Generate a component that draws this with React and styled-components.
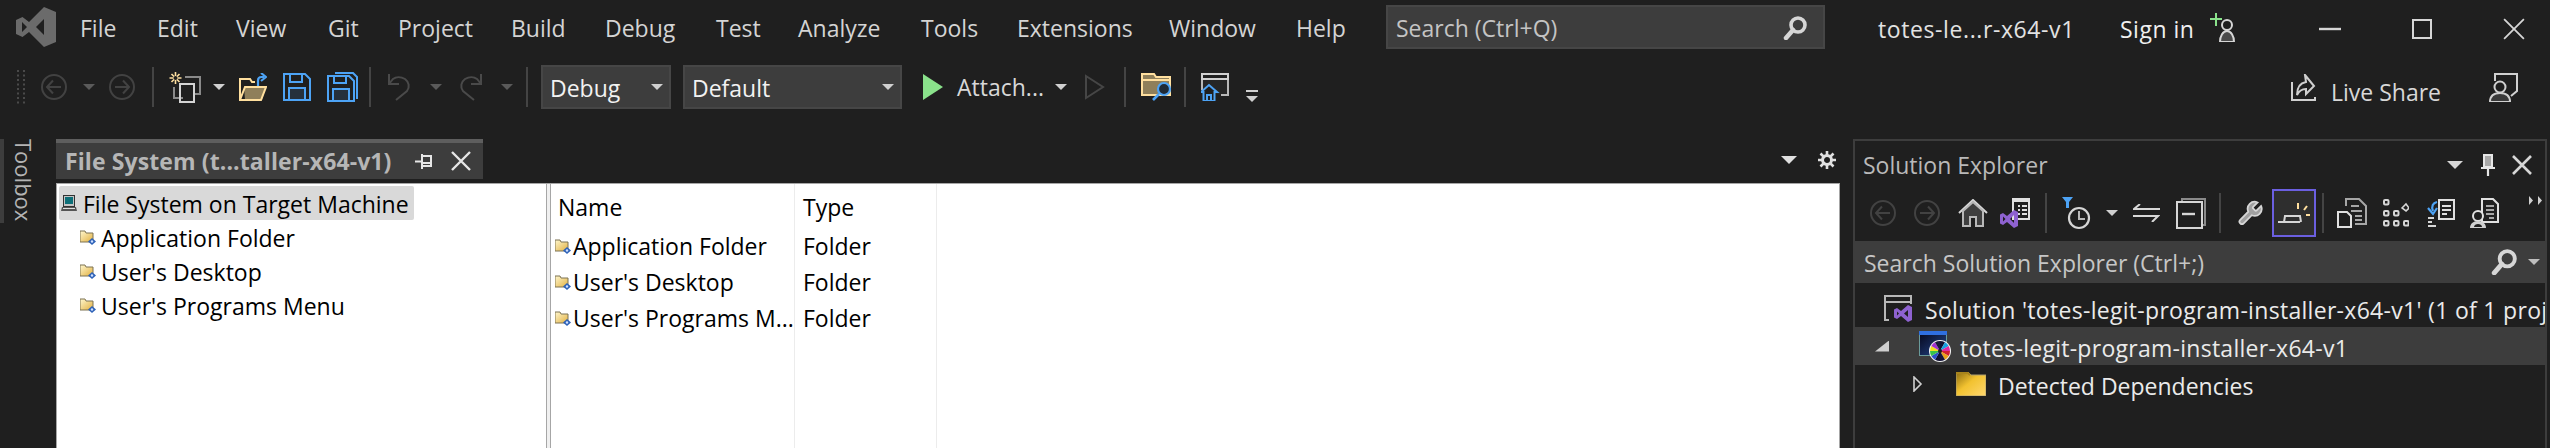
import React from 'react';
import styled, { createGlobalStyle } from 'styled-components';

const Global = createGlobalStyle`
  html, body { margin: 0; padding: 0; background: #1f1f1f; }
  * { box-sizing: border-box; }
`;

const FONT = `"Open Sans", "Noto Sans", "Liberation Sans", sans-serif`;

const Page = styled.div`
  width: 2550px; height: 448px; overflow: hidden; background: #1f1f1f;
  display: flex; flex-direction: column; font-family: ${FONT}; color: #d6d6d6;
  font-size: 23px; letter-spacing: 0;
`;
const TitleBar = styled.header`
  height: 54px; display: flex; align-items: center; flex: none;
`;
const Logo = styled.svg`
  width: 40px; height: 40px; margin-left: 16px; margin-right: 24px; flex: none;
`;
const MenuItem = styled.span`
  width: ${p => p.$w}px; flex: none; color: #d4d4d4; padding-top: 2px; white-space: nowrap;
`;
const QuickSearch = styled.div`
  width: 439px; height: 44px; margin-left: 1px; flex: none; background: #3d3d3d;
  border: 2px solid #464646; display: flex; align-items: center; justify-content: space-between;
  padding: 2px 16px 0 8px; color: #c4c4c4;
`;
const SolutionName = styled.span`
  margin-left: 53px; width: 242px; flex: none; color: #e2e2e2; padding-top: 4px; white-space: nowrap;
  letter-spacing: 0.6px;
`;
const SignIn = styled.span`
  width: 90px; flex: none; color: #f0f0f0; padding-top: 4px; letter-spacing: 0.5px;
`;
const WindowButtons = styled.div`
  margin-left: 81px; display: flex; gap: 71px; align-items: center; padding-top: 4px;
`;

const Toolbar = styled.div`
  height: 66px; flex: none; display: flex; align-items: center; padding-left: 16px;
`;
const ToolIcon = styled.svg`
  flex: none; margin-left: ${p => p.$ml || 0}px; display: block;
`;
const Sep = styled.i`
  flex: none; display: block; width: 2px; height: 40px; background: #444;
  margin-left: ${p => p.$ml || 0}px;
`;
const Arrow = styled.i`
  flex: none; display: block; width: 0; height: 0;
  border-left: ${p => p.$s || 6}px solid transparent; border-right: ${p => p.$s || 6}px solid transparent;
  border-top: ${p => p.$s || 6}px solid ${p => p.$c || '#d0d0d0'};
  margin-left: ${p => p.$ml || 0}px;
`;
const Combo = styled.div`
  width: ${p => p.$w}px; height: 44px; flex: none; margin-left: ${p => p.$ml}px;
  background: #3d3d3d; border: 2px solid #464646; display: flex; align-items: center;
  justify-content: space-between; padding: 0 6px 0 7px; color: #f2f2f2;
`;
const ComboText = styled.span`
  padding-top: 2px;
`;
const ToolText = styled.span`
  flex: none; margin-left: ${p => p.$ml || 0}px; width: ${p => p.$w}px; color: #d8d8d8;
  white-space: nowrap; padding-top: ${p => p.$pt || 0}px;
`;

const Body = styled.div`
  flex: 1; min-height: 0; display: flex; padding-top: 19px;
`;
const ToolboxStrip = styled.aside`
  width: 56px; flex: none; display: flex; align-items: flex-start;
`;
const StripBar = styled.i`
  display: block; width: 4px; height: 84px; background: #3d3d3d; flex: none;
`;
const StripLabel = styled.span`
  writing-mode: vertical-rl; margin-left: 8px; line-height: 24px; color: #b4b4b4; font-size: 22px;
`;
const DocArea = styled.main`
  width: 1784px; flex: none; display: flex; flex-direction: column;
`;
const TabWell = styled.div`
  height: 40px; flex: none; display: flex; align-items: center;
`;
const Tab = styled.div`
  width: 427px; height: 40px; flex: none; background: #3d3d3d; border-top: 4px solid #5e5e5e;
  display: flex; align-items: center; padding-left: 9px;
`;
const TabTitle = styled.span`
  width: 350px; flex: none; font-weight: 700; color: #b6b6b6; font-size: 23px; letter-spacing: 0.1px; white-space: nowrap;
`;
const WellTools = styled.div`
  margin-left: auto; display: flex; align-items: center; gap: 21px; padding-right: 4px; padding-top: 2px;
`;
const Designer = styled.div`
  flex: 1; min-height: 0; margin-top: 4px; background: #fff; border: 1px solid #a6a6a6;
  border-bottom: 0; display: flex; color: #000; box-shadow: inset 0 0 0 1px #fff;
`;
const TreePane = styled.div`
  width: 490px; flex: none; padding: 2px 2px; display: flex; flex-direction: column; align-items: flex-start;
  border-right: 1px solid #a6a6a6;
`;
const Splitter = styled.i`
  display: block; width: 4px; flex: none; background: #f0f0f0; border-right: 1px solid #a6a6a6;
`;
const TreeRow = styled.div`
  height: 34px; display: flex; align-items: center; white-space: nowrap; border-radius: 2px;
  padding: 0 5px 0 ${p => p.$indent}px; gap: ${p => p.$gap}px;
  background: ${p => (p.$sel ? '#d9d9d9' : 'transparent')};
`;
const TreeLabel = styled.span`
  padding-top: 2px;
`;
const ListPane = styled.div`
  flex: 1; display: flex; align-items: stretch;
`;
const ListColumn = styled.div`
  width: ${p => p.$w}px; flex: none; border-right: 1px solid #ececec; padding-top: 6px;
  padding-left: ${p => p.$pl}px; overflow: hidden;
`;
const ColHead = styled.div`
  height: 36px; line-height: 34px; margin-bottom: 2px; padding-left: ${p => p.$pl || 0}px;
`;
const ListCell = styled.div`
  height: 36px; display: flex; align-items: center; white-space: nowrap; gap: 2px;
`;

const SolutionPanel = styled.aside`
  margin-left: 13px; width: 694px; flex: none; border: 2px solid #3d3d3d; border-bottom: 0;
  display: flex; flex-direction: column;
`;
const PanelTitle = styled.div`
  height: 48px; flex: none; display: flex; align-items: center; padding-left: 8px; color: #b9b9b9;
`;
const PanelTitleText = styled.span`
  width: 584px; flex: none; white-space: nowrap;
`;
const PanelBar = styled.div`
  height: 52px; flex: none; display: flex; align-items: flex-start; padding-left: 15px;
`;
const BarCell = styled.div`
  margin-left: ${p => p.$ml || 0}px; flex: none; height: ${p => p.$h || 48}px; display: flex; align-items: center;
  ${p => p.$active && 'border: 2px solid #6b5fe0; background: #2e2e2e; width: 44px; justify-content: center;'}
`;
const PanelSearch = styled.div`
  height: 42px; flex: none; background: #3d3d3d; display: flex; align-items: center; padding: 0 8px 0 9px; color: #c6c6c6;
`;
const PanelSearchText = styled.span`
  width: 627px; flex: none; white-space: nowrap; padding-top: 2px;
`;
const SolutionTree = styled.div`
  padding-top: 6px; display: flex; flex-direction: column;
`;
const SolutionRow = styled.div`
  height: 38px; display: flex; align-items: center; white-space: nowrap; overflow: hidden; color: #eaeaea;
  padding-left: ${p => p.$indent}px;
  background: ${p => (p.$sel ? '#3d3d3d' : 'transparent')};
`;
const RowIcon = styled.span`
  flex: none; display: block; margin-left: ${p => p.$ml || 0}px;
`;
const RowText = styled.span`
  padding-top: 4px; margin-left: ${p => p.$ml || 0}px; letter-spacing: ${p => p.$ls || 0}px;
`;
const SmallSvg = styled.svg`
  flex: none; display: block;
`;
const CloseWrap = styled.span`
  flex: none; display: block; margin-left: ${p => p.$ml}px;
`;

const Circ = ({ dir, ml }) => (
  <ToolIcon $ml={ml} width="26" height="26" viewBox="0 0 26 26" fill="none" stroke="#424242" strokeWidth="2">
    <circle cx="13" cy="13" r="12" />
    {dir === 'l'
      ? <path d="M20 13H6M12 6.5L6 13l6 6.5" />
      : <path d="M6 13h14M14 6.5l6 6.5-6 6.5" />}
  </ToolIcon>
);

const Gripper = () => (
  <ToolIcon width="10" height="34" viewBox="0 0 10 34" fill="#4a4a4a">
    {[0, 9, 18, 27].map(y => <rect key={y} x="1" y={y} width="2" height="2" />)}
    {[0, 4.5, 9, 13.5, 18, 22.5, 27, 31.5].map(y => <rect key={y} x="7" y={y} width="2" height="2" />)}
    {[4.5, 13.5, 22.5, 31.5].map(y => <rect key={y} x="1" y={y} width="2" height="2" />)}
  </ToolIcon>
);

const NewProject = ({ ml }) => (
  <ToolIcon $ml={ml} width="32" height="32" viewBox="0 0 32 32" fill="none">
    <path d="M16 6h15v17H24M5 16v11h9" stroke="#8a8a8a" strokeWidth="2" />
    <rect x="11" y="13" width="14" height="18" stroke="#d4d4d4" strokeWidth="2" />
    <path d="M6.5 1v12M.5 7h12M2.5 3l8 8M10.5 3l-8 8" stroke="#ffe0a0" strokeWidth="1.6" />
    <circle cx="6.5" cy="7" r="2" fill="#1f1f1f" />
  </ToolIcon>
);

const OpenFolder = ({ ml }) => (
  <ToolIcon $ml={ml} width="28" height="28" viewBox="0 0 28 28" fill="none">
    <path d="M6 27h17l4-13H5z" fill="#8f7f5a" />
    <path d="M1 27V6h10l2 3h3M1 27h21l5-13H6L1 27z" stroke="#ffdf9e" strokeWidth="2" />
    <path d="M19 13V7.5c0-2 1.5-3.5 3.5-3.5H25" stroke="#4da3f5" strokeWidth="2.2" />
    <path d="M22 0l5 4-5 4" stroke="#4da3f5" strokeWidth="2.2" />
  </ToolIcon>
);

const Save = ({ ml }) => (
  <ToolIcon $ml={ml} width="28" height="28" viewBox="0 0 28 28" fill="none">
    <path d="M1 1h21l5 5v21H1z" fill="#1f1f1f" stroke="#4da3f5" strokeWidth="2" />
    <path d="M6 15h16v12H6z" fill="#25303c" stroke="#4da3f5" strokeWidth="2" />
    <path d="M7 1v8h12V1" stroke="#4da3f5" strokeWidth="2" />
  </ToolIcon>
);

const SaveAll = ({ ml }) => (
  <ToolIcon $ml={ml} width="31" height="30" viewBox="0 0 31 30" fill="none">
    <path d="M8 1h18l4 4v22" stroke="#4da3f5" strokeWidth="2" />
    <path d="M1 4h21l5 5v20H1z" fill="#1f1f1f" stroke="#4da3f5" strokeWidth="2" />
    <path d="M6 17h16v12H6z" fill="#25303c" stroke="#4da3f5" strokeWidth="2" />
    <path d="M7 4v7h12V4" stroke="#4da3f5" strokeWidth="2" />
  </ToolIcon>
);

const Undo = ({ ml, flip }) => (
  <ToolIcon $ml={ml} width="25" height="28" viewBox="0 0 25 28" fill="none" stroke="#4a4a4a" strokeWidth="2"
    style={flip ? { transform: 'scaleX(-1)' } : undefined}>
    <path d="M2 1v10h10" />
    <path d="M2 11l4-5c3-2.500 8-2.500 12 0 4 3 5 8 2 12L9 27" />
  </ToolIcon>
);

const Play = ({ ml }) => (
  <ToolIcon $ml={ml} width="20" height="26" viewBox="0 0 20 26">
    <path d="M0 0l20 13L0 26z" fill="#8ae28b" />
  </ToolIcon>
);

const PlayOutline = ({ ml }) => (
  <ToolIcon $ml={ml} width="20" height="26" viewBox="0 0 20 26" fill="none">
    <path d="M1 2l17 11L1 24z" stroke="#464646" strokeWidth="2" />
  </ToolIcon>
);

const FolderSearch = ({ ml }) => (
  <ToolIcon $ml={ml} width="31" height="28" viewBox="0 0 31 28" fill="none">
    <path d="M1 1h12l2 3h14v18H1z" fill="#8f7f5a" stroke="#ffdf9e" strokeWidth="2" />
    <path d="M2 7h26" stroke="#ffdf9e" strokeWidth="2" />
    <circle cx="23" cy="16" r="6" fill="#1f2a36" stroke="#4da3f5" strokeWidth="2.200" />
    <path d="M18 21l-6 6" stroke="#4da3f5" strokeWidth="2.600" />
  </ToolIcon>
);

const WindowHome = ({ ml }) => (
  <ToolIcon $ml={ml} width="28" height="28" viewBox="0 0 28 28" fill="none">
    <path d="M1 17V1h26v21h-7" fill="#262626" stroke="#b8b8b8" strokeWidth="2" />
    <path d="M1 1h26v5H1z" fill="#1f1f1f" stroke="#d0d0d0" strokeWidth="2" />
    <path d="M0 19l8-7 8 7h-2.500v9H2.500v-9z" fill="#1f1f1f" stroke="#4da3f5" strokeWidth="2" />
    <path d="M6 28v-6h4v6" stroke="#4da3f5" strokeWidth="2" />
  </ToolIcon>
);

const Overflow = ({ ml }) => (
  <ToolIcon $ml={ml} width="12" height="12" viewBox="0 0 12 12" style={{ marginTop: 18 }}>
    <rect y="0" width="12" height="2" fill="#d0d0d0" />
    <path d="M0 6h12l-6 6z" fill="#d0d0d0" />
  </ToolIcon>
);

const Magnifier = ({ size = 24 }) => (
  <SmallSvg width={size} height={size} viewBox="0 0 24 24" fill="none">
    <circle cx="15" cy="9" r="7" stroke="#d6d6d6" strokeWidth="3.600" />
    <path d="M10 14L3 22" stroke="#d6d6d6" strokeWidth="4.500" strokeLinecap="round" />
  </SmallSvg>
);

const Person = () => (
  <SmallSvg width="28" height="29" viewBox="0 0 28 29" fill="none">
    <circle cx="17" cy="12" r="5" stroke="#d6d6d6" strokeWidth="2" />
    <path d="M10 29c0-6 3-11 7-11s7 5 7 11z" fill="#4a4a4a" stroke="#d6d6d6" strokeWidth="2" />
    <path d="M6 0v13M0 6h12" stroke="#8ae28b" strokeWidth="2" />
  </SmallSvg>
);

const LiveShareIcon = ({ ml }) => (
  <ToolIcon $ml={ml} width="25" height="27" viewBox="0 0 25 27" fill="none">
    <path d="M1 8v18h23v-3" stroke="#d0d0d0" strokeWidth="2" />
    <path d="M14 1l9 11-8 8v-5c-4 0-7 2-9 6 0-7 3-12 9-13z" stroke="#d0d0d0" strokeWidth="2" />
  </ToolIcon>
);

const Feedback = ({ ml }) => (
  <ToolIcon $ml={ml} width="29" height="29" viewBox="0 0 29 29" fill="none">
    <path d="M6 8V1h22v17l-6 5" stroke="#d0d0d0" strokeWidth="2" />
    <circle cx="11" cy="14" r="5.500" fill="#1f1f1f" stroke="#d0d0d0" strokeWidth="2" />
    <path d="M1 29c0-6 4-9 10-9s10 3 10 9z" fill="#3a3a3a" stroke="#d0d0d0" strokeWidth="2" />
  </ToolIcon>
);

const Cross = ({ size = 20, color = '#d6d6d6', sw = 2 }) => (
  <SmallSvg width={size} height={size} viewBox="0 0 20 20" fill="none">
    <path d="M1 1l18 18M19 1L1 19" stroke={color} strokeWidth={sw} />
  </SmallSvg>
);

const TabPin = ({ ml }) => (
  <ToolIcon $ml={ml} width="17" height="15" viewBox="0 0 17 15" fill="none">
    <path d="M0 7.500h6" stroke="#e6e6e6" strokeWidth="2" />
    <rect x="7" y="2" width="9" height="10" stroke="#e6e6e6" strokeWidth="2" />
    <path d="M7 0v15M16 9H8" stroke="#e6e6e6" strokeWidth="2" />
  </ToolIcon>
);

const Gear = () => (
  <SmallSvg width="18" height="18" viewBox="0 0 18 18">
    <circle cx="9" cy="9" r="4.500" fill="none" stroke="#e0e0e0" strokeWidth="3" />
    <path d="M9 0v4M9 14v4M0 9h4M14 9h4M2.500 2.500l3 3M12.500 12.500l3 3M15.500 2.500l-3 3M5.500 12.500l-3 3" stroke="#e0e0e0" strokeWidth="2.600" />
  </SmallSvg>
);

const SmallFolder = () => (
  <SmallSvg width="16" height="15" viewBox="0 0 16 15">
    <defs>
      <linearGradient id="sf" x1="0" y1="0" x2="1" y2="1">
        <stop offset="0" stopColor="#fff8d0" />
        <stop offset="1" stopColor="#e2b040" />
      </linearGradient>
    </defs>
    <path d="M0 1h5l1 2h7v9H0z" fill="url(#sf)" stroke="#7d7353" strokeWidth="1" />
    <path d="M12 8l4 3.500-4 3.500-4-3.500z" fill="#2e62b8" />
    <circle cx="12" cy="11.500" r="1.200" fill="#cfe0ff" />
  </SmallSvg>
);

const MachineIcon = () => (
  <SmallSvg width="16" height="17" viewBox="0 0 16 17">
    <rect x="2.500" y="0.500" width="11" height="11" fill="#c4c4c4" stroke="#333" />
    <rect x="4" y="2" width="8" height="7" fill="#0d6f78" />
    <path d="M1 12h14l1 4H0z" fill="#555" />
    <path d="M2 13.500h12" stroke="#ddd" />
  </SmallSvg>
);

const HomeIcon = ({ ml }) => (
  <ToolIcon $ml={ml} width="30" height="28" viewBox="0 0 30 28" fill="none">
    <path d="M1 14L15 1l14 13" stroke="#d6d6d6" strokeWidth="2" />
    <path d="M5 12v15h7v-9h6v9h7V12L15 3z" fill="#3f3f3f" stroke="#b8b8b8" strokeWidth="2" />
  </ToolIcon>
);

const VsDoc = ({ ml }) => (
  <ToolIcon $ml={ml} width="30" height="30" viewBox="0 0 30 30" fill="none">
    <rect x="13" y="1" width="16" height="20" fill="#1f1f1f" stroke="#e0e0e0" strokeWidth="2" />
    <path d="M13 3h16" stroke="#e0e0e0" strokeWidth="2" />
    <path d="M18 8h2M22 8h5M18 12h2M22 12h5M18 16h2M22 16h5" stroke="#e0e0e0" strokeWidth="2" />
    <path fillRule="evenodd" fill="#8e62d0" d="M14 12l4 2v14l-4 2-7-6-4 3-3-1.500v-9L3 15l4 3zM14 17l-4 4 4 4zM3 18.500v5l2.500-2.500z" />
  </ToolIcon>
);

const ClockFilter = ({ ml }) => (
  <ToolIcon $ml={ml} width="29" height="33" viewBox="0 0 29 33" fill="none">
    <path d="M0 0h11L7 5v6H4V5z" fill="#4da3f5" />
    <circle cx="17" cy="21" r="10" stroke="#d6d6d6" strokeWidth="2.200" />
    <path d="M17 14v8h6" stroke="#b8b8b8" strokeWidth="2" />
  </ToolIcon>
);

const SyncIcon = ({ ml }) => (
  <ToolIcon $ml={ml} width="27" height="18" viewBox="0 0 27 18" fill="none">
    <path d="M7 0L1 5h26" stroke="#d8d8d8" strokeWidth="2" />
    <path d="M0 12h25l-6 6" stroke="#d8d8d8" strokeWidth="2" />
  </ToolIcon>
);

const CollapseIcon = ({ ml }) => (
  <ToolIcon $ml={ml} width="30" height="31" viewBox="0 0 30 31" fill="none">
    <path d="M6 3V1h23v26h-3" stroke="#8a8a8a" strokeWidth="2" />
    <rect x="1" y="4" width="25" height="26" stroke="#d6d6d6" strokeWidth="2" />
    <path d="M6 16h13" stroke="#d6d6d6" strokeWidth="2.400" />
  </ToolIcon>
);

const WrenchIcon = ({ ml }) => (
  <ToolIcon $ml={ml} width="28" height="29" viewBox="0 0 24 24" fill="none">
    <path d="M14.700 6.300a1 1 0 0 0 0 1.400l1.600 1.600a1 1 0 0 0 1.400 0l3.770-3.770a6 6 0 0 1-7.940 7.940l-6.910 6.910a2.120 2.120 0 0 1-3-3l6.910-6.910a6 6 0 0 1 7.940-7.940l-3.760 3.760z"
      fill="#a0a0a0" stroke="#d6d6d6" strokeWidth="1.500" />
  </ToolIcon>
);

const SparkLine = () => (
  <SmallSvg width="32" height="22" viewBox="0 0 32 22" fill="none">
    <path d="M0 20h22" stroke="#d6d6d6" strokeWidth="2" />
    <path d="M6 20l1-6h15l1 6" stroke="#d6d6d6" strokeWidth="2" />
    <path d="M20 1v6" stroke="#ffdf9e" strokeWidth="2" />
    <path d="M26 8l3-4" stroke="#ffdf9e" strokeWidth="2" />
    <path d="M28 13h4" stroke="#ffdf9e" strokeWidth="2" />
  </SmallSvg>
);

const Doc2 = ({ ml }) => (
  <ToolIcon $ml={ml} width="30" height="30" viewBox="0 0 30 30" fill="none">
    <path d="M9 8V1h13l7 7v18H18" stroke="#a6a6a6" strokeWidth="2" />
    <path d="M14 8h8M14 13h11M18 18h7M18 22h7" stroke="#a6a6a6" strokeWidth="2" />
    <path d="M1 14h9l4 4v11H1z" fill="#1f1f1f" stroke="#e0e0e0" strokeWidth="2" />
  </ToolIcon>
);

const GroupIcon = ({ ml }) => (
  <ToolIcon $ml={ml} width="26" height="28" viewBox="0 0 26 28" fill="none" stroke="#d6d6d6" strokeWidth="2">
    {[[3, 3], [3, 14], [13, 14], [3, 24], [13, 24], [23, 24]].map(([x, y]) => (
      <rect key={`${x}-${y}`} x={x - 2} y={y - 2} width="4.500" height="4.500" rx="1" />
    ))}
    <path d="M19 9l4-4 3 4-3 3z" strokeWidth="1.600" />
  </ToolIcon>
);

const SyncDoc = ({ ml }) => (
  <ToolIcon $ml={ml} width="28" height="29" viewBox="0 0 28 29" fill="none">
    <rect x="12" y="1" width="15" height="19" fill="#1f1f1f" stroke="#e0e0e0" strokeWidth="2" />
    <path d="M15 7h9M15 11h9M15 15h5" stroke="#e0e0e0" strokeWidth="2" />
    <path d="M10 3c-4 1-6 4-4 9" stroke="#4da3f5" strokeWidth="2.200" />
    <path d="M1 9l5 6 4-6" stroke="#4da3f5" strokeWidth="2.200" />
    <path d="M1 19h6M1 23h4M1 27h8" stroke="#d6d6d6" strokeWidth="2" />
  </ToolIcon>
);

const PersonDoc = ({ ml }) => (
  <ToolIcon $ml={ml} width="30" height="30" viewBox="0 0 30 30" fill="none">
    <path d="M13 1h11l5 5v18H13z" fill="#1f1f1f" stroke="#e0e0e0" strokeWidth="2" />
    <path d="M17 8h8M17 12h8M17 16h8M20 20h5" stroke="#a6a6a6" strokeWidth="2" />
    <circle cx="9" cy="18" r="5" fill="#1f1f1f" stroke="#e0e0e0" strokeWidth="2" />
    <path d="M1 30c0-4 3-7 8-7s8 3 8 7z" fill="#d0d0d0" />
    <path d="M5 29c0-2 2-3 4-3s4 1 4 3z" fill="#1f1f1f" />
  </ToolIcon>
);

const SolutionIcon = () => (
  <SmallSvg width="28" height="27" viewBox="0 0 28 27" fill="none">
    <path d="M5 25H1V1h26v8" stroke="#b8b8b8" strokeWidth="2" />
    <path d="M1 7h26" stroke="#b8b8b8" strokeWidth="2" />
    <path fillRule="evenodd" fill="#8e62d0" d="M24 10l4 2v13l-4 2-7-6-4 3-3-1.500v-8l3-1.500 4 3zM24 15l-4 3.500 4 3.500zM13 16.500v4l2-2z" />
  </SmallSvg>
);

const ProjectIcon = () => {
  const colors = ['#d02030', '#e8a018', '#16163a', '#101030', '#2a50c8', '#36c24a', '#f0e020', '#a030d0', '#16163a', '#101030', '#18a0e0', '#e02aa0'];
  const cx = 21, cy = 20, r = 10;
  return (
    <SmallSvg width="32" height="31" viewBox="0 0 32 31">
      <defs>
        <linearGradient id="prj" x1="0" y1="0" x2="1" y2="1">
          <stop offset="0" stopColor="#050518" />
          <stop offset="1" stopColor="#24488f" />
        </linearGradient>
      </defs>
      <rect x="0.500" y="0.500" width="27" height="24" fill="url(#prj)" stroke="#6a9a9a" />
      <rect x="0" y="0" width="28" height="4" fill="#2f6fe0" />
      <circle cx={cx} cy={cy} r={r + 1} fill="#f4f4f4" />
      {colors.map((c, i) => {
        const a1 = (i / 12) * Math.PI * 2, a2 = ((i + 1) / 12) * Math.PI * 2;
        return (
          <path key={i} fill={c}
            d={`M${cx} ${cy}L${cx + r * Math.cos(a1)} ${cy + r * Math.sin(a1)}A${r} ${r} 0 0 1 ${cx + r * Math.cos(a2)} ${cy + r * Math.sin(a2)}Z`} />
        );
      })}
      <circle cx={cx} cy={cy} r="2" fill="#1f1f1f" />
    </SmallSvg>
  );
};

const DepFolder = () => (
  <SmallSvg width="30" height="24" viewBox="0 0 30 24">
    <defs>
      <linearGradient id="dep" x1="0" y1="0" x2="1" y2="1">
        <stop offset="0" stopColor="#8a6a10" />
        <stop offset="0.450" stopColor="#f2c230" />
        <stop offset="1" stopColor="#ffd870" />
      </linearGradient>
    </defs>
    <path d="M0 0h12l3 3h15v21H0z" fill="url(#dep)" stroke="#b0a070" strokeWidth="1" />
    <path d="M0 1h12l2 2" stroke="#a8841c" strokeWidth="2" fill="none" />
  </SmallSvg>
);

const DownCaret = styled.i`
  display: block; width: 14px; height: 11px; background: #cfcfcf; flex: none;
  clip-path: polygon(100% 0, 100% 100%, 0 100%);
`;
const RightCaret = () => (
  <SmallSvg width="10" height="16" viewBox="0 0 10 16" fill="none">
    <path d="M1 1l7 7-7 7z" stroke="#d0d0d0" strokeWidth="1.600" />
  </SmallSvg>
);

const DoubleChevron = () => (
  <SmallSvg width="13" height="9" viewBox="0 0 13 9">
    <path d="M0 0l4 4.500L0 9zM9 0l4 4.500L9 9z" fill="#d0d0d0" />
  </SmallSvg>
);

const PanelPin = ({ ml }) => (
  <ToolIcon $ml={ml} width="14" height="22" viewBox="0 0 14 22" fill="none">
    <path d="M3 1h8v12H3z" fill="#a8a8a8" stroke="#e6e6e6" strokeWidth="2" />
    <path d="M0 14h14M7 14v8" stroke="#e6e6e6" strokeWidth="2.200" />
  </ToolIcon>
);

const menus = [
  ['File', 77], ['Edit', 79], ['View', 92], ['Git', 70], ['Project', 113], ['Build', 94], ['Debug', 111],
  ['Test', 82], ['Analyze', 123], ['Tools', 96], ['Extensions', 152], ['Window', 127], ['Help', 89],
];

export default function App() {
  return (
    <Page>
      <Global />
      <TitleBar>
        <Logo viewBox="0 0 40 40">
          <path fillRule="evenodd" fill="#6b6b6b"
            d="M28 0l12 5v30l-12 5-15-15-6.500 5L0 27V13l6.500-3L13 15zM28 12l-8 8 8 8zM6 15v10l5-5z" />
        </Logo>
        {menus.map(([m, w]) => <MenuItem key={m} $w={w}>{m}</MenuItem>)}
        <QuickSearch>
          <span>Search (Ctrl+Q)</span>
          <Magnifier />
        </QuickSearch>
        <SolutionName>totes-le...r-x64-v1</SolutionName>
        <SignIn>Sign in</SignIn>
        <Person />
        <WindowButtons>
          <svg width="22" height="20" viewBox="0 0 22 20"><path d="M0 10h22" stroke="#d6d6d6" strokeWidth="2.400" /></svg>
          <svg width="20" height="20" viewBox="0 0 20 20" fill="none"><rect x="1" y="1" width="18" height="18" stroke="#d6d6d6" strokeWidth="2" /></svg>
          <Cross size={22} sw={1.6} />
        </WindowButtons>
      </TitleBar>
      <Toolbar>
        <Gripper />
        <Circ dir="l" ml={15} />
        <Arrow $c="#5a5a5a" $ml={16} />
        <Circ dir="r" ml={14} />
        <Sep $ml={17} />
        <NewProject ml={15} />
        <Arrow $ml={12} />
        <OpenFolder ml={14} />
        <Save ml={16} />
        <SaveAll ml={16} />
        <Sep $ml={11} />
        <Undo ml={16} />
        <Arrow $c="#5a5a5a" $ml={18} />
        <Undo ml={16} flip />
        <Arrow $c="#5a5a5a" $ml={18} />
        <Sep $ml={13} />
        <Combo $w={130} $ml={13}><ComboText>Debug</ComboText><Arrow /></Combo>
        <Combo $w={219} $ml={12}><ComboText>Default</ComboText><Arrow /></Combo>
        <Play ml={21} />
        <ToolText $ml={14} $w={98}>Attach...</ToolText>
        <Arrow />
        <PlayOutline ml={18} />
        <Sep $ml={19} />
        <FolderSearch ml={15} />
        <Sep $ml={12} />
        <WindowHome ml={15} />
        <Overflow ml={17} />
        <LiveShareIcon ml={1033} />
        <ToolText $ml={15} $w={158} $pt={10}>Live Share</ToolText>
        <Feedback />
      </Toolbar>
      <Body>
        <ToolboxStrip>
          <StripBar />
          <StripLabel>Toolbox</StripLabel>
        </ToolboxStrip>
        <DocArea>
          <TabWell>
            <Tab>
              <TabTitle>File System (t...taller-x64-v1)</TabTitle>
              <TabPin />
              <CloseWrap $ml={19}><Cross size={20} color="#e6e6e6" sw={2.400} /></CloseWrap>
            </Tab>
            <WellTools>
              <Arrow $c="#e0e0e0" $s={8} />
              <Gear />
            </WellTools>
          </TabWell>
          <Designer>
            <TreePane>
              <TreeRow $sel $indent={2} $gap={6}><MachineIcon /><TreeLabel>File System on Target Machine</TreeLabel></TreeRow>
              <TreeRow $indent={21} $gap={5}><SmallFolder /><TreeLabel>Application Folder</TreeLabel></TreeRow>
              <TreeRow $indent={21} $gap={5}><SmallFolder /><TreeLabel>User's Desktop</TreeLabel></TreeRow>
              <TreeRow $indent={21} $gap={5}><SmallFolder /><TreeLabel>User's Programs Menu</TreeLabel></TreeRow>
            </TreePane>
            <Splitter />
            <ListPane>
              <ListColumn $w={244} $pl={4}>
                <ColHead $pl={3}>Name</ColHead>
                <ListCell><SmallFolder />Application Folder</ListCell>
                <ListCell><SmallFolder />User's Desktop</ListCell>
                <ListCell><SmallFolder />User's Programs M...</ListCell>
              </ListColumn>
              <ListColumn $w={142} $pl={8}>
                <ColHead>Type</ColHead>
                <ListCell>Folder</ListCell>
                <ListCell>Folder</ListCell>
                <ListCell>Folder</ListCell>
              </ListColumn>
            </ListPane>
          </Designer>
        </DocArea>
        <SolutionPanel>
          <PanelTitle>
            <PanelTitleText>Solution Explorer</PanelTitleText>
            <Arrow $c="#d6d6d6" $s={8} />
            <PanelPin ml={18} />
            <CloseWrap $ml={17}><Cross size={20} sw={2.600} /></CloseWrap>
          </PanelTitle>
          <PanelBar>
            <BarCell><Circ dir="l" /></BarCell>
            <BarCell $ml={18}><Circ dir="r" /></BarCell>
            <BarCell $ml={18}><HomeIcon /></BarCell>
            <BarCell $ml={12}><VsDoc /></BarCell>
            <BarCell $ml={15}><Sep /></BarCell>
            <BarCell $ml={15}><ClockFilter /></BarCell>
            <BarCell $ml={15}><Arrow /></BarCell>
            <BarCell $ml={15}><SyncIcon /></BarCell>
            <BarCell $ml={16}><CollapseIcon /></BarCell>
            <BarCell $ml={13}><Sep /></BarCell>
            <BarCell $ml={15}><WrenchIcon /></BarCell>
            <BarCell $ml={8} $active><SparkLine /></BarCell>
            <BarCell $ml={6}><Sep /></BarCell>
            <BarCell $ml={13}><Doc2 /></BarCell>
            <BarCell $ml={16}><GroupIcon /></BarCell>
            <BarCell $ml={18}><SyncDoc /></BarCell>
            <BarCell $ml={14}><PersonDoc /></BarCell>
            <BarCell $ml={30} $h={22}><DoubleChevron /></BarCell>
          </PanelBar>
          <PanelSearch>
            <PanelSearchText>Search Solution Explorer (Ctrl+;)</PanelSearchText>
            <Magnifier size={26} />
            <Arrow $c="#bdbdbd" $ml={11} />
          </PanelSearch>
          <SolutionTree>
            <SolutionRow $indent={29}>
              <SolutionIcon /><RowText $ml={13} $ls={0.3}>Solution 'totes-legit-program-installer-x64-v1' (1 of 1 project)</RowText>
            </SolutionRow>
            <SolutionRow $sel $indent={20}>
              <DownCaret />
              <RowIcon $ml={30}><ProjectIcon /></RowIcon>
              <RowText $ml={9} $ls={0.27}>totes-legit-program-installer-x64-v1</RowText>
            </SolutionRow>
            <SolutionRow $indent={58}>
              <RightCaret />
              <RowIcon $ml={33}><DepFolder /></RowIcon>
              <RowText $ml={12}>Detected Dependencies</RowText>
            </SolutionRow>
          </SolutionTree>
        </SolutionPanel>
      </Body>
    </Page>
  );
}
